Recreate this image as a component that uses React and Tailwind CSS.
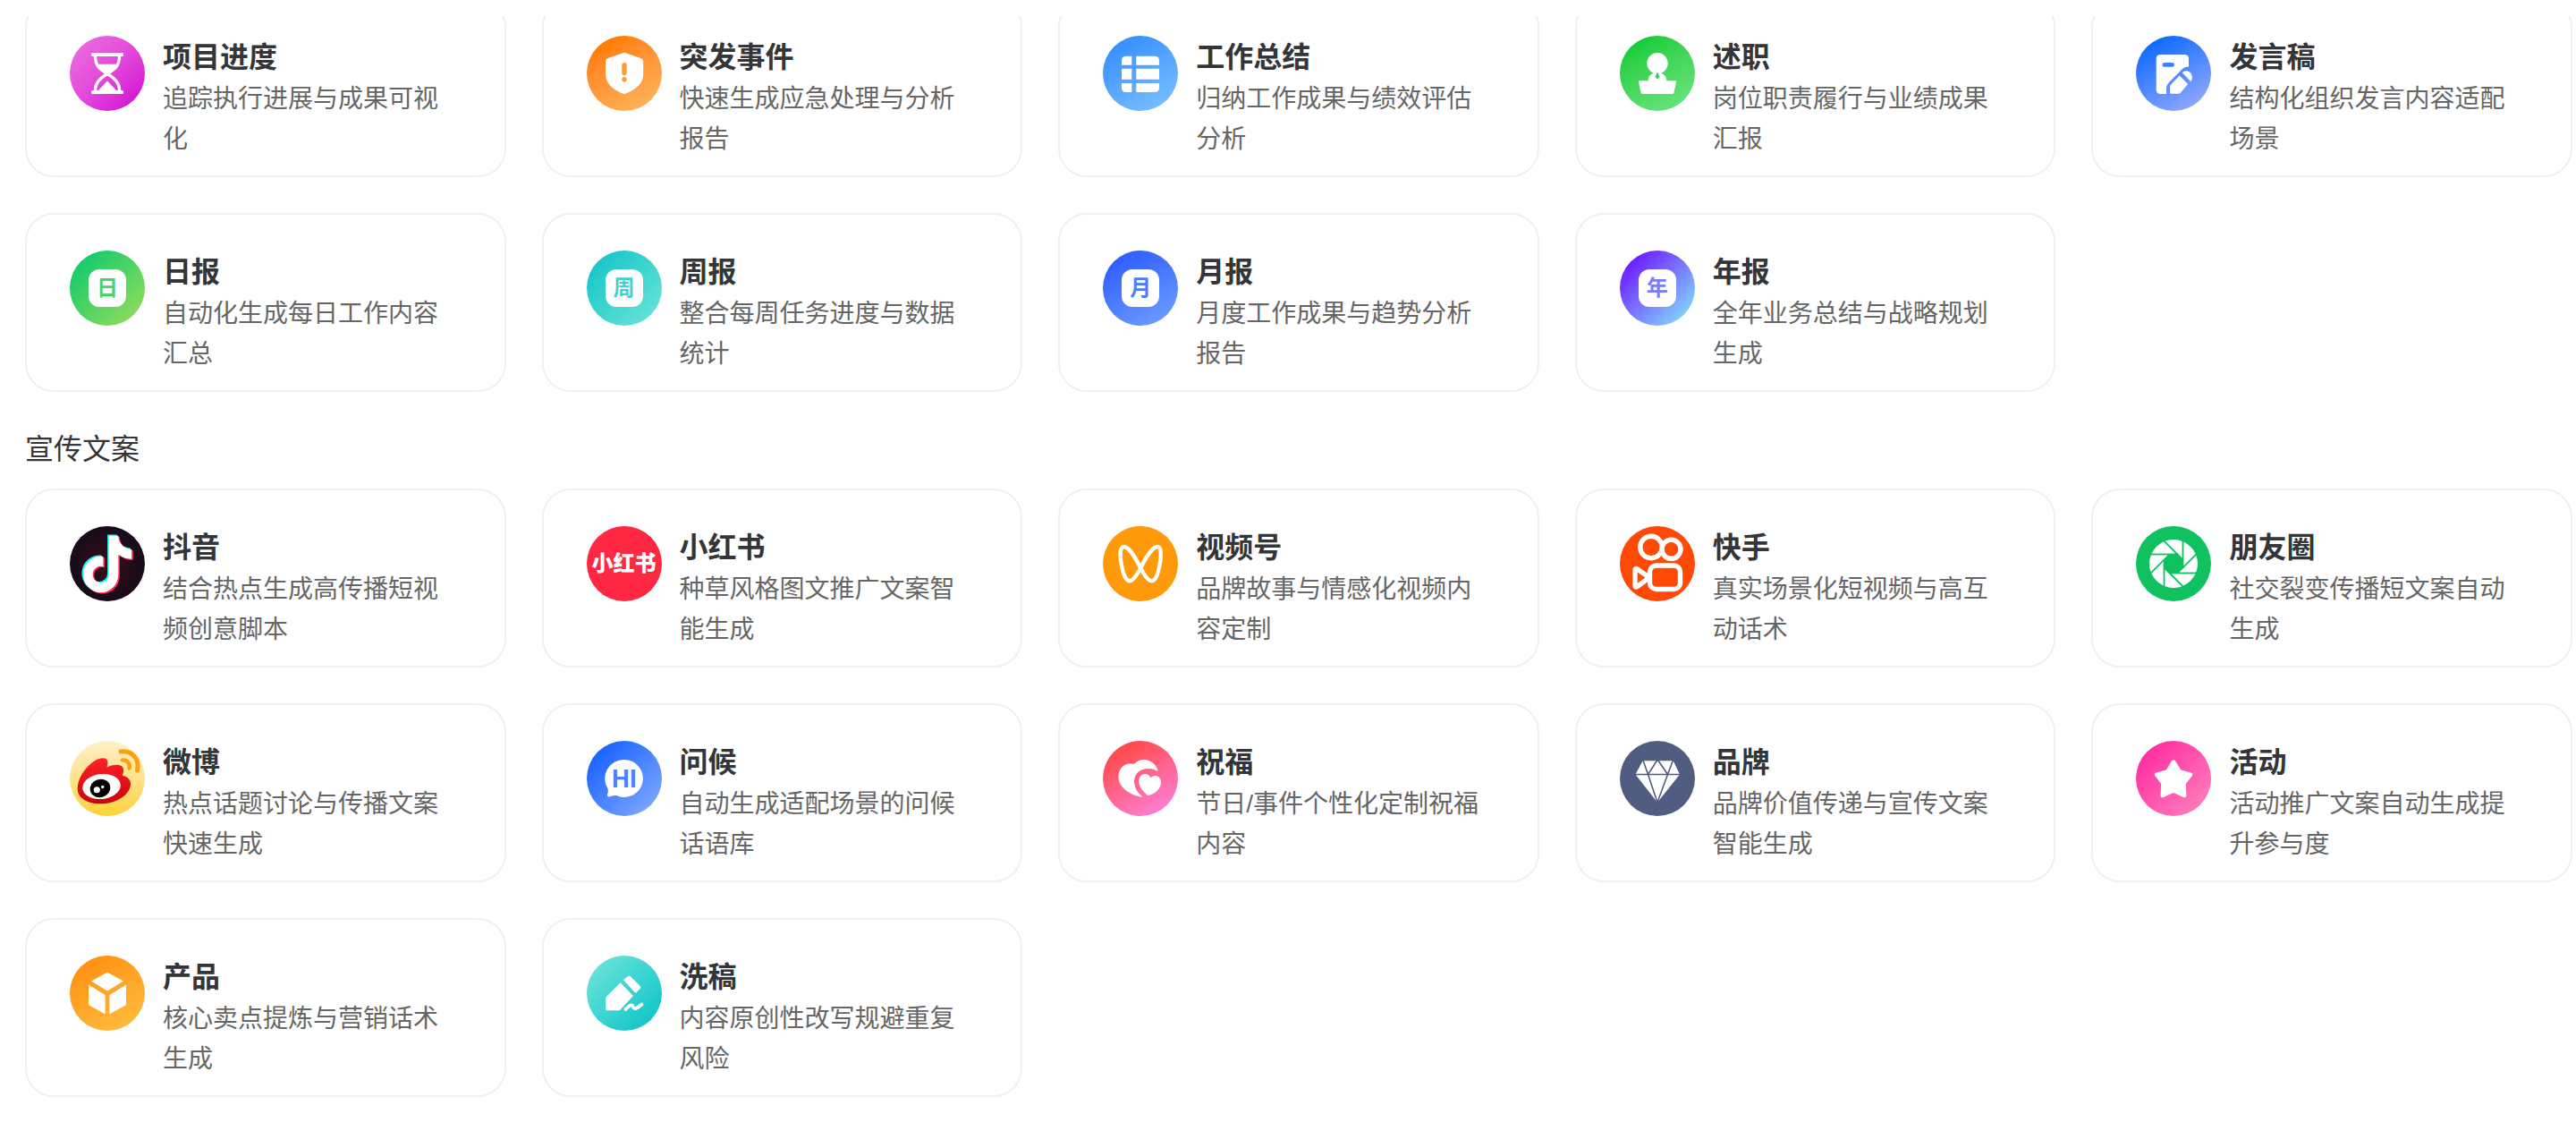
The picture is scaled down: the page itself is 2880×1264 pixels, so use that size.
const reportTools = [
  {
    title: '项目进度',
    desc: '追踪执行进展与成果可视化',
    bg: 'bg-linear-135 from-[#ec6ae0] from-10% to-[#d916d6] to-85%',
    icon: <HourglassIcon />,
  },
  {
    title: '突发事件',
    desc: '快速生成应急处理与分析报告',
    bg: 'bg-linear-150 from-[#ff7d00] from-15% to-[#ffb65c] to-95%',
    icon: <ShieldIcon />,
  },
  {
    title: '工作总结',
    desc: '归纳工作成果与绩效评估分析',
    bg: 'bg-linear-150 from-[#338dfd] from-10% to-[#7cc0ff] to-95%',
    icon: <TableIcon />,
  },
  {
    title: '述职',
    desc: '岗位职责履行与业绩成果汇报',
    bg: 'bg-linear-150 from-[#06cb35] from-10% to-[#6ae67f] to-95%',
    icon: <StampIcon />,
  },
  {
    title: '发言稿',
    desc: '结构化组织发言内容适配场景',
    bg: 'bg-linear-150/srgb from-[#0a68ff] from-10% to-[#91a8ff] to-90%',
    icon: <DraftIcon />,
  },
  {
    title: '日报',
    desc: '自动化生成每日工作内容汇总',
    bg: 'bg-linear-135/srgb from-[#0fcb6c] from-10% to-[#8fdc5c] to-90%',
    icon: <CalendarBadge text="日" color="text-[#4fd263]" />,
  },
  {
    title: '周报',
    desc: '整合每周任务进度与数据统计',
    bg: 'bg-linear-135/srgb from-[#15c6c8] from-10% to-[#66e2d8] to-90%',
    icon: <CalendarBadge text="周" color="text-[#3dd4d0]" />,
  },
  {
    title: '月报',
    desc: '月度工作成果与趋势分析报告',
    bg: 'bg-linear-150/srgb from-[#2c5bff] from-10% to-[#6c9bff] to-90%',
    icon: <CalendarBadge text="月" color="text-[#4a7cff]" />,
  },
  {
    title: '年报',
    desc: '全年业务总结与战略规划生成',
    bg: 'bg-linear-135/srgb from-[#6f1fff] from-15% to-[#82d8ff] to-90%',
    icon: <CalendarBadge text="年" color="text-[#7a7bff]" />,
  },
]

const promoTools = [
  {
    title: '抖音',
    desc: '结合热点生成高传播短视频创意脚本',
    bg: 'bg-radial from-[#3a0a1c] to-[#170b1a] to-70%',
    icon: <DouyinIcon />,
  },
  {
    title: '小红书',
    desc: '种草风格图文推广文案智能生成',
    bg: 'bg-[#ff2742]',
    icon: <span className="text-2xl leading-none font-black whitespace-nowrap text-white">小红书</span>,
  },
  {
    title: '视频号',
    desc: '品牌故事与情感化视频内容定制',
    bg: 'bg-[#ff9a0a]',
    icon: <ChannelsIcon />,
  },
  {
    title: '快手',
    desc: '真实场景化短视频与高互动话术',
    bg: 'bg-[#ff4906]',
    icon: <KuaishouIcon />,
  },
  {
    title: '朋友圈',
    desc: '社交裂变传播短文案自动生成',
    bg: 'bg-[#10c15f]',
    icon: <ApertureIcon />,
  },
  {
    title: '微博',
    desc: '热点话题讨论与传播文案快速生成',
    bg: 'bg-linear-180 from-[#fff0c8] to-[#ffd22c]',
    icon: <WeiboIcon />,
  },
  {
    title: '问候',
    desc: '自动生成适配场景的问候话语库',
    bg: 'bg-linear-135/srgb from-[#1460ff] from-10% to-[#7da6ff] to-90%',
    icon: <GreetingIcon />,
  },
  {
    title: '祝福',
    desc: '节日/事件个性化定制祝福内容',
    bg: 'bg-linear-150/srgb from-[#ff4a4a] from-15% to-[#ff80d8] to-90%',
    icon: <HeartsIcon />,
  },
  {
    title: '品牌',
    desc: '品牌价值传递与宣传文案智能生成',
    bg: 'bg-[#515d80]',
    icon: <DiamondIcon />,
  },
  {
    title: '活动',
    desc: '活动推广文案自动生成提升参与度',
    bg: 'bg-linear-135/srgb from-[#ff30a2] from-15% to-[#ff7dbc] to-90%',
    icon: <StarIcon />,
  },
  {
    title: '产品',
    desc: '核心卖点提炼与营销话术生成',
    bg: 'bg-linear-150/srgb from-[#ff8f12] from-10% to-[#ffbf40] to-95%',
    icon: <BoxIcon />,
  },
  {
    title: '洗稿',
    desc: '内容原创性改写规避重复风险',
    bg: 'bg-linear-135/srgb from-[#6ae3da] from-10% to-[#10c5c7] to-90%',
    icon: <RewriteIcon />,
  },
]

function Glyph({ children }) {
  return (
    <svg viewBox="0 0 84 84" className="size-full" fill="#fff" aria-hidden="true">
      {children}
    </svg>
  )
}

function HourglassIcon() {
  return (
    <Glyph>
      <rect x="24" y="19" width="36" height="4" rx="1.5" />
      <rect x="24" y="61" width="36" height="4" rx="1.5" />
      <g fill="none" stroke="#fff" strokeWidth="3.4">
        <path d="M28.4 22C28.4 34 34 37.5 42 42.5C50 47.5 55.6 52 55.6 62" />
        <path d="M55.6 22C55.6 34 50 37.5 42 42.5C34 47.5 28.4 52 28.4 62" />
      </g>
      <path d="M30 31.7H54C52 36.5 47 39 43.5 42H40.5C37 39 32 36.5 30 31.7Z" />
      <path d="M42 50.5L53.5 62.5H30.5Z" />
    </Glyph>
  )
}

function ShieldIcon() {
  return (
    <Glyph>
      <path d="M40.5 19.2Q42 18.5 43.5 19.2L61 25.2Q63.2 26 63.2 28.5V43C63.2 52 56.5 59.5 44 64.5Q42 65.4 40 64.5C27.5 59.5 21 52 21 43V28.5Q21 26 23 25.2Z" />
      <rect x="39.3" y="30" width="5.4" height="14.3" rx="2.7" fill="#ff9c33" />
      <circle cx="42" cy="48.7" r="2.7" fill="#ff9c33" />
    </Glyph>
  )
}

function TableIcon() {
  return (
    <Glyph>
      <path d="M26 22.7H32.3V32.7H21V27.7Q21 22.7 26 22.7Z" />
      <path d="M37.3 22.7H58Q63 22.7 63 27.7V32.7H37.3Z" />
      <path d="M21 36.7H32.3V48.7H21Z" />
      <path d="M37.3 36.7H63V48.7H37.3Z" />
      <path d="M21 53H32.3V63H26Q21 63 21 58Z" />
      <path d="M37.3 53H63V58Q63 63 58 63H37.3Z" />
    </Glyph>
  )
}

function StampIcon() {
  return (
    <Glyph>
      <circle cx="42" cy="30.7" r="11.7" />
      <path d="M39 40H45C45 41.5 52.4 43 52.4 50.3H62Q63.3 50.3 63 51.6L60.4 63.8Q60 65 58.8 65H25.2Q24 65 23.6 63.8L21 51.6Q20.7 50.3 22 50.3H31.6C31.6 43 39 41.5 39 40Z" />
      <path d="M40.8 41.5H43.2L43.2 43L44.5 46.2L42 48.5L39.5 46.2L40.8 43Z" fill="#2fd555" />
    </Glyph>
  )
}

function DraftIcon() {
  return (
    <Glyph>
      <path d="M27 21H54.5Q59 21 59 25.5V34.5C55.5 34.5 53 36 50.5 38.5L37 52Q34 55 34 58.5V65H27.5Q22.7 65 22.7 60.2V25.5Q22.7 21 27 21Z" />
      <path d="M48.7 44.5L58.2 54L50 63.5Q49 64.8 47.5 64.8H39.5Q38.2 64.8 38.2 63.5V56.5Q38.2 55.3 39 54.5Z" />
      <path d="M51.8 41.2C54 38.8 58 38.5 60.5 41C63.3 43.8 63.8 48 61.2 51Z" />
      <rect x="29.5" y="30" width="13.5" height="4.8" rx="2.2" fill="#3f80ff" />
    </Glyph>
  )
}

function CalendarBadge({ text, color }) {
  return (
    <span className="flex size-[42px] items-center justify-center rounded-xl bg-white">
      <span className={`text-2xl leading-none font-bold ${color}`}>{text}</span>
    </span>
  )
}

const notePath =
  'M448,209.91a210.06,210.06,0,0,1-122.77-39.25V349.38A162.55,162.55,0,1,1,185,188.31V278.2a74.62,74.62,0,1,0,52.23,71.18V0l88,0a121.18,121.18,0,0,0,1.86,22.17A122.18,122.18,0,0,0,381,102.39a121.43,121.43,0,0,0,67,20.14Z'

function DouyinIcon() {
  return (
    <Glyph>
      <path d={notePath} transform="translate(13.4 9.4) scale(0.121 0.124)" fill="#25f4ee" />
      <path d={notePath} transform="translate(16.6 12) scale(0.121 0.124)" fill="#fe2c55" />
      <path d={notePath} transform="translate(15 10.7) scale(0.121 0.124)" />
    </Glyph>
  )
}

function ChannelsIcon() {
  return (
    <Glyph>
      <path
        d="M42.2 47C36 34 28.5 23 23.5 23C19 23 18.8 32 20.8 43C22.8 54 26 61.2 30 61.2C34 61.2 38.5 54 42.2 47C48.5 34 56 23 61 23C65.5 23 65.6 32 63.6 43C61.6 54 58.4 61.2 54.4 61.2C50.4 61.2 46 54 42.2 47Z"
        fill="none"
        stroke="#fff"
        strokeWidth="4.4"
      />
    </Glyph>
  )
}

function KuaishouIcon() {
  return (
    <Glyph>
      <g fill="none" stroke="#fff" strokeWidth="5.4" strokeLinejoin="round">
        <circle cx="35" cy="23.5" r="12.3" />
        <circle cx="57.5" cy="25.8" r="10.5" />
        <rect x="33.5" y="44" width="34" height="26.5" rx="7" />
        <path d="M33 57.5L19.5 48Q17 46.5 17 49V66.5Q17 69 19.5 67.5Z" />
      </g>
    </Glyph>
  )
}

function ApertureIcon() {
  const turns = [0, 45, 90, 135, 180, 225, 270, 315]
  return (
    <Glyph>
      <circle cx="42" cy="42" r="27" />
      <g fill="#10c15f">
        <path d="M37.6 31.4H46.4L52.6 37.6V46.4L46.4 52.6H37.6L31.4 46.4V37.6Z" />
        {turns.map((deg) => (
          <rect key={deg} x="14" y="30.6" width="32.5" height="1.8" transform={`rotate(${deg} 42 42)`} />
        ))}
      </g>
    </Glyph>
  )
}

function WeiboIcon() {
  return (
    <Glyph>
      <defs>
        <linearGradient id="weibo-red" x1="0" y1="0" x2="0" y2="1">
          <stop offset="0" stopColor="#ff2028" />
          <stop offset="1" stopColor="#cc0508" />
        </linearGradient>
      </defs>
      <path
        d="M8.7 53C9 42 16 32 24 25C29 20.5 36 18 40 19.8C43.5 21.5 42.5 26 41.5 29.5C47 26.5 55 25.5 58.5 28.5C61 31 60 36 58.8 39C64.5 39.5 68.5 43.5 68 49C66.5 62 50 70.3 34.5 70.3C20 70.3 8.3 64 8.7 53Z"
        fill="url(#weibo-red)"
      />
      <ellipse cx="35.5" cy="51" rx="21.3" ry="14" transform="rotate(-6 35.5 51)" />
      <ellipse cx="34" cy="53" rx="11.5" ry="10" fill="#000" transform="rotate(-15 34 53)" />
      <ellipse cx="30.3" cy="54.8" rx="3.6" ry="3.5" />
      <circle cx="36.7" cy="51.5" r="1.7" />
      <g fill="none" stroke="#ff9f14" strokeWidth="5" strokeLinecap="round">
        <path d="M57 12C69 10.5 78.5 20 75.5 33" />
        <path d="M59 21.5C64 21 68 25.5 66.5 30.5" strokeWidth="4.5" />
      </g>
    </Glyph>
  )
}

function GreetingIcon() {
  return (
    <Glyph>
      <path d="M42 21A21 21 0 1 1 33 61Q30.5 60.5 26.5 62.3Q22.5 63.3 23 59.8Q24.5 56.5 23.6 53.5A21 21 0 0 1 42 21Z" />
      <text
        x="42"
        y="52"
        textAnchor="middle"
        fill="#4b83ff"
        className="font-['Roboto',sans-serif] text-[28px] font-bold"
      >
        HI
      </text>
    </Glyph>
  )
}

function HeartsIcon() {
  return (
    <Glyph>
      <path d="M44.5 63C31 61 17.8 52.5 17.4 41C17.1 31 24 23.5 33.5 25.8Q35.5 26 36.5 24.6C39 21.8 43 20.6 47 21.1C54.5 22 60.5 27 61.5 34C57 31.5 51 30.2 45.5 31.8C39 33.5 35 39 35 45C35 52 39 58.5 44.5 63Z" />
      <path d="M50.5 61C45 57 40.6 51.5 40.3 45.5C40.1 41 43 37 47.3 37.1C50.3 37.2 52.5 39 53.6 41.2C56 38.6 60.5 38.2 63 41C66.3 45 65.3 50 62.5 53.8C59.8 57.5 56 60 50.5 61Z" />
    </Glyph>
  )
}

function DiamondIcon() {
  return (
    <Glyph>
      <path d="M25.7 22.3H59.7L67 37.5L42 68.7L17.4 37.5Z" />
      <g fill="none" stroke="#515d80" strokeWidth="1.6">
        <path d="M16 37.5H68" />
        <path d="M25.7 21L31.5 37.5L42.2 21L53.5 37.5L59.7 21" />
        <path d="M31.5 37.5L42 68.7L53.5 37.5" />
      </g>
    </Glyph>
  )
}

function StarIcon() {
  return (
    <Glyph>
      <path
        d="M42 23.5L48.8 34.5L61 37.6L53.5 47.3L54.2 61L42 55.5L29.8 61L30.5 47.3L23 37.6L35.2 34.5Z"
        stroke="#fff"
        strokeWidth="4.5"
        strokeLinejoin="round"
      />
    </Glyph>
  )
}

function BoxIcon() {
  return (
    <Glyph>
      <path d="M40.5 19.5Q42 18.5 43.5 19.5L60 28.5L42 39.4L24 28.5Z" />
      <path d="M21 32.5L39.6 44V65.2L22.5 56Q21 55 21 53.5Z" />
      <path d="M63 32.5L44.4 44V65.2L61.5 56Q63 55 63 53.5Z" />
    </Glyph>
  )
}

function RewriteIcon() {
  return (
    <Glyph>
      <path d="M37.6 30.3L52 45L37.8 60.2Q37 61.2 35.5 61.2H22.5Q21.3 61.2 21.3 60V47.5Q21.3 46.5 22 45.8Z" />
      <path d="M40.8 27L45.8 23.2Q47.3 22 48.8 23.3L59.7 34Q61 35.5 59.7 37L54.5 42Z" />
      <path
        d="M43.5 60C46 57.5 48.5 54.5 50.5 55.5C52.5 56.5 51.5 60 55 59C58 58 59.5 55.5 61.5 54.5"
        fill="none"
        stroke="#fff"
        strokeWidth="3.8"
        strokeLinecap="round"
      />
    </Glyph>
  )
}

function ToolCard({ tool }) {
  return (
    <a
      href="#"
      className="flex items-start gap-5 rounded-4xl border-2 border-[#efeff6] bg-white px-12 pt-10 pb-[18px] transition-shadow hover:shadow-lg"
    >
      <span
        className={`flex size-[84px] shrink-0 items-center justify-center overflow-hidden rounded-full ${tool.bg}`}
      >
        {tool.icon}
      </span>
      <div className="min-w-0 flex-1">
        <h3 className="text-[32px] leading-12 font-bold text-[#333539]">{tool.title}</h3>
        <p className="text-[28px] leading-[45px] text-[#666]">{tool.desc}</p>
      </div>
    </a>
  )
}

function ToolGrid({ tools }) {
  return (
    <div className="grid grid-cols-5 gap-10">
      {tools.map((tool) => (
        <ToolCard key={tool.title} tool={tool} />
      ))}
    </div>
  )
}

export default function App() {
  return (
    <div className="bg-white pt-[18px] font-['Liberation_Sans','Noto_Sans_CJK_SC',sans-serif]">
      {/* Scroll area, first row sits partly under its top edge */}
      <main className="overflow-hidden pr-1 pb-9 pl-7">
        <section className="-mt-5">
          <ToolGrid tools={reportTools} />
        </section>

        <section className="mt-10">
          <h2 className="mb-5 text-[32px] leading-12 text-[#333539]">宣传文案</h2>
          <ToolGrid tools={promoTools} />
        </section>
      </main>
    </div>
  )
}
